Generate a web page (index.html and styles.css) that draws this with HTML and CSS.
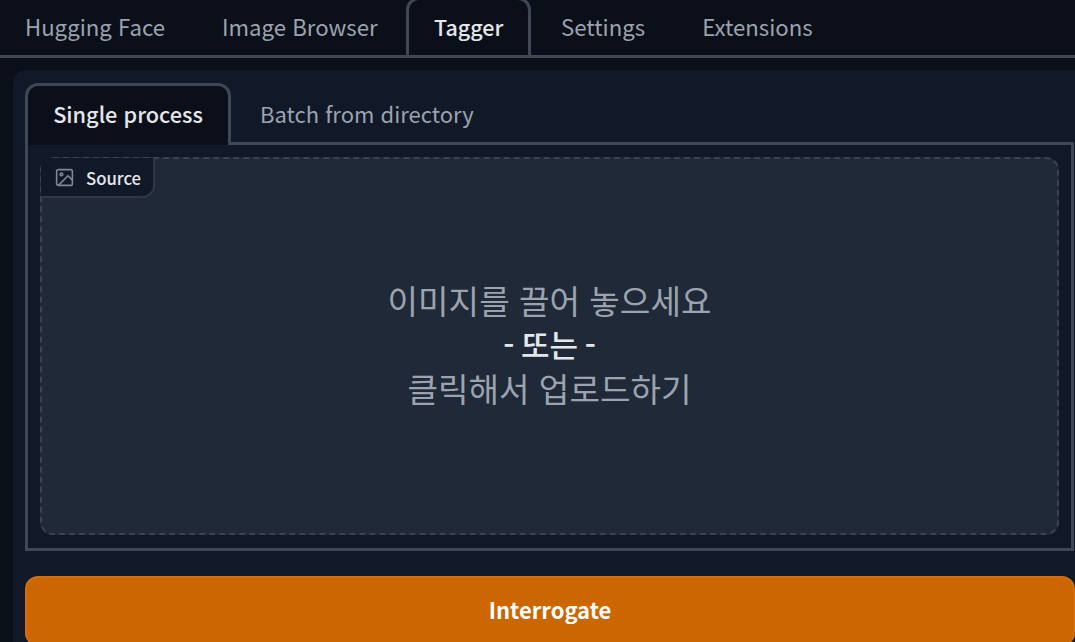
FILE: index.html
```html
<!DOCTYPE html>
<html lang="ko">
<head>
<meta charset="utf-8">
<title>Tagger</title>
<link rel="stylesheet" href="styles.css">
</head>
<body>
<nav class="top-tabs">
  <button class="tab">Hugging Face</button>
  <button class="tab">Image Browser</button>
  <button class="tab tab-active">Tagger</button>
  <button class="tab">Settings</button>
  <button class="tab">Extensions</button>
</nav>
<main class="panel">
  <nav class="sub-tabs">
    <button class="sub-tab sub-tab-active">Single process</button>
    <button class="sub-tab">Batch from directory</button>
  </nav>
  <section class="sub-panel">
    <div class="drop">
      <div class="source-label">
        <svg class="source-icon" viewBox="0 0 24 24" fill="none" stroke="currentColor" stroke-width="1.8" stroke-linecap="round" stroke-linejoin="round"><rect x="3" y="3" width="18" height="18" rx="2"/><circle cx="8.5" cy="8.5" r="1.5"/><path d="M21 15l-5-5L5 21"/></svg>
        <span>Source</span>
      </div>
      <div class="drop-text">
        <div>이미지를 끌어 놓으세요</div>
        <div class="drop-or">- 또는 -</div>
        <div>클릭해서 업로드하기</div>
      </div>
    </div>
  </section>
  <button class="primary">Interrogate</button>
</main>
</body>
</html>
```

FILE: styles.css
```css
* { box-sizing: border-box; }
html, body { height: 100%; }
body {
  margin: 0;
  background: #0b0f19;
  overflow: hidden;
  width: 1075px;
  height: 642px;
  font-family: "Noto Sans CJK KR", "Noto Sans", sans-serif;
}
button { font-family: inherit; background: none; border: 0; cursor: pointer; }

.top-tabs {
  display: flex;
  height: 58px;
  border-bottom: 3px solid #3f4757;
}
.tab {
  height: 55px;
  padding: 0 28.5px 4px;
  font-size: 22.2px;
  color: #9ca3af;
  white-space: nowrap;
}
.tab:first-child { padding-left: 25px; }
.tab-active {
  width: 125px;
  height: 58px;
  margin: -3px 1.5px -3px 0;
  padding: 0 0 3px;
  font-size: 21.5px;
  font-weight: 500;
  color: #e5e7eb;
  background: #0b0f19;
  border: 3px solid #3f4757;
  border-bottom: 0;
  border-radius: 13px 13px 0 0;
  position: relative;
  z-index: 1;
}

.panel {
  margin: 12px 0 0 13px;
  height: 572px;
  padding: 13px 0 0 12px;
  background: #111827;
  border-radius: 13px 0 0 0;
}
.sub-tabs {
  display: flex;
  height: 62px;
  position: relative;
  z-index: 1;
}
.sub-tab {
  height: 59px;
  padding: 0 26px 0 29px;
  font-size: 22px;
  color: #9ca3af;
  white-space: nowrap;
}
.sub-tab-active {
  width: 206px;
  height: 62px;
  padding: 0 0 4px;
  font-size: 21.7px;
  font-weight: 500;
  color: #e5e7eb;
  background: #0b0f19;
  border: 3px solid #3f4757;
  border-bottom: 0;
  border-radius: 13px 13px 0 0;
}
.sub-panel {
  width: 1049px;
  height: 409px;
  margin-top: -3px;
  padding: 12px 12px 13px 12px;
  border: 3px solid #3f4757;
}
.drop {
  position: relative;
  height: 100%;
  background: #1f2937;
  border: 2px dashed #3a4352;
  border-radius: 13px;
  display: flex;
  align-items: center;
  justify-content: center;
}
.source-label {
  position: absolute;
  top: -1px;
  left: -1px;
  width: 114px;
  height: 40px;
  display: flex;
  align-items: center;
  gap: 11px;
  padding: 1px 0 0 13px;
  font-size: 16.7px;
  font-weight: 500;
  color: #e5e7eb;
  background: #111827;
  border-right: 2px solid #2f3846;
  border-bottom: 2px solid #2f3846;
  border-radius: 0 0 13px 0;
}
.source-icon { width: 21px; height: 21px; color: #7f8896; flex: none; }
.drop-text {
  font-size: 33.2px;
  line-height: 44px;
  text-align: center;
  color: #9ca3af;
  margin-top: -5px;
}
.drop-or { color: #e5e7eb; font-size: 31px; font-weight: 500; word-spacing: -2px; }

.primary {
  display: block;
  width: 1050px;
  height: 70px;
  margin-top: 25px;
  font-size: 22px;
  font-weight: 700;
  color: #fff;
  background: #cc6600;
  border: 2px solid #d56d0c;
  border-radius: 13px;
  padding-bottom: 6px;
}
```
